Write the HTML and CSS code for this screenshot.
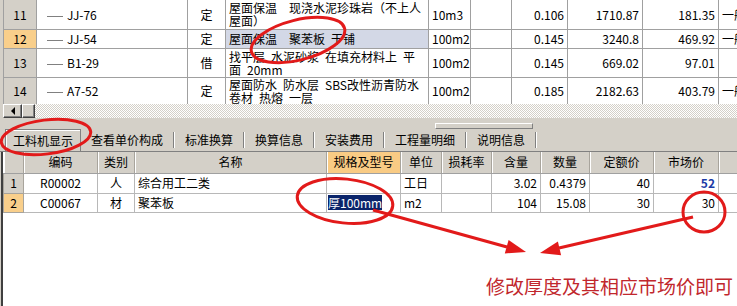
FILE: index.html
```html
<!DOCTYPE html>
<html lang="zh-CN">
<head>
    <meta charset="UTF-8">
    <title>工料机显示</title>
    <link rel="stylesheet" href="styles.css">
</head>
<body>
    <div class="upper">
        <div class="grid-top">
            <table class="qd">
                <colgroup>
                    <col class="w33"><col class="w151"><col class="w38"><col class="w203"><col class="w42">
                    <col class="w41"><col class="w56"><col class="w75"><col class="w76"><col class="w40">
                </colgroup>
                <tr class="first">
                    <td class="rh">11</td>
                    <td class="code"><span class="branch"></span>JJ-76</td>
                    <td class="c">定</td>
                    <td>屋面保温　现浇水泥珍珠岩（不上人<br>屋面）</td>
                    <td>10m3</td>
                    <td></td>
                    <td class="r">0.106</td>
                    <td class="r">1710.87</td>
                    <td class="r">181.35</td>
                    <td>一般</td>
                </tr>
                <tr class="one">
                    <td class="rh cur">12</td>
                    <td class="code"><span class="branch"></span>JJ-54</td>
                    <td class="c">定</td>
                    <td class="sel">屋面保温　聚苯板&ensp;干铺</td>
                    <td>100m2</td>
                    <td></td>
                    <td class="r">0.145</td>
                    <td class="r">3240.8</td>
                    <td class="r">469.92</td>
                    <td>一般</td>
                </tr>
                <tr>
                    <td class="rh">13</td>
                    <td class="code"><span class="branch"></span>B1-29</td>
                    <td class="c">借</td>
                    <td>找平层&ensp;水泥砂浆&ensp;在填充材料上&ensp;平<br>面&ensp;20mm</td>
                    <td>100m2</td>
                    <td></td>
                    <td class="r">0.145</td>
                    <td class="r">669.02</td>
                    <td class="r">97.01</td>
                    <td></td>
                </tr>
                <tr class="last">
                    <td class="rh">14</td>
                    <td class="code"><span class="branch"></span>A7-52</td>
                    <td class="c">定</td>
                    <td>屋面防水&ensp;防水层&ensp;SBS改性沥青防水<br>卷材&ensp;热熔&ensp;一层</td>
                    <td>100m2</td>
                    <td></td>
                    <td class="r">0.185</td>
                    <td class="r">2182.63</td>
                    <td class="r">403.79</td>
                    <td>一般</td>
                </tr>
            </table>
        </div>
        <div class="hscroll">
            <div class="sb-btn"></div>
            <div class="sb-thumb"></div>
            <div class="sb-track"></div>
        </div>
    </div>

    <div class="split"><div class="grip"></div></div>

    <div class="tabs">
        <div class="tab on">工料机显示</div>
        <div class="tab">查看单价构成</div>
        <div class="tab">标准换算</div>
        <div class="tab">换算信息</div>
        <div class="tab">安装费用</div>
        <div class="tab">工程量明细</div>
        <div class="tab">说明信息</div>
    </div>

    <div class="lower">
        <table class="gl">
            <colgroup>
                <col class="w20"><col class="w74"><col class="w37"><col class="w192"><col class="w74"><col class="w41">
                <col class="w50"><col class="w49"><col class="w49"><col class="w64"><col class="w65"><col class="w19">
            </colgroup>
            <tr>
                <th></th>
                <th>编码</th>
                <th>类别</th>
                <th>名称</th>
                <th class="hot">规格及型号</th>
                <th>单位</th>
                <th>损耗率</th>
                <th>含量</th>
                <th>数量</th>
                <th>定额价</th>
                <th>市场价</th>
                <th></th>
            </tr>
            <tr class="row1">
                <td class="rh">1</td>
                <td class="c">R00002</td>
                <td class="c">人</td>
                <td>综合用工二类</td>
                <td></td>
                <td>工日</td>
                <td></td>
                <td class="r">3.02</td>
                <td class="r">0.4379</td>
                <td class="r">40</td>
                <td class="r"><span class="mk">52</span></td>
                <td></td>
            </tr>
            <tr class="row2">
                <td class="rh cur">2</td>
                <td class="c">C00067</td>
                <td class="c">材</td>
                <td>聚苯板</td>
                <td class="editing"><span class="edit">厚100mm</span></td>
                <td>m2</td>
                <td></td>
                <td class="r">104</td>
                <td class="r">15.08</td>
                <td class="r">30</td>
                <td class="r">30</td>
                <td></td>
            </tr>
        </table>
        <div class="note">修改厚度及其相应市场价即可</div>
    </div>

    <!-- 红色标注 -->
    <svg class="marks" width="737" height="306" viewBox="0 0 737 306">
        <g fill="none" stroke="#e21a1a" stroke-width="3">
            <ellipse cx="298" cy="40" rx="48" ry="20" transform="rotate(-14 298 40)"/>
            <ellipse cx="46" cy="137" rx="45" ry="17" transform="rotate(-7 46 137)"/>
            <ellipse cx="345" cy="201" rx="48" ry="22" transform="rotate(6 345 201)"/>
            <ellipse cx="704" cy="212" rx="21" ry="20"/>
            <line x1="373" y1="210" x2="507" y2="247"/>
            <line x1="693" y1="217" x2="559" y2="248"/>
        </g>
        <g fill="#e21a1a">
            <polygon points="526,252 504.8,253.4 508.6,239.9"/>
            <polygon points="540,253 557.9,241.6 561.1,255.2"/>
        </g>
    </svg>
</body>
</html>
```

FILE: styles.css
```css
/* ==================================== */
/* 基本样式                              */
/* ==================================== */
* {
    box-sizing: border-box;
}

body {
    margin: 0;
    width: 737px;
    height: 306px;
    overflow: hidden;
    position: relative;
    background-color: #d4d0c8;
    font-family: "Noto Sans CJK SC", sans-serif;
    font-size: 12px;
    line-height: 12px;
    color: #000;
}

table {
    border-collapse: collapse;
    table-layout: fixed;
}

td, th {
    padding: 0 3px;
    white-space: nowrap;
    overflow: hidden;
    vertical-align: middle;
    text-align: left;
}

.c { text-align: center; }
.r { text-align: right; }

.w19 { width: 19px; }
.w20 { width: 20px; }
.w33 { width: 33px; }
.w37 { width: 37px; }
.w38 { width: 38px; }
.w40 { width: 40px; }
.w41 { width: 41px; }
.w42 { width: 42px; }
.w49 { width: 49px; }
.w50 { width: 50px; }
.w56 { width: 56px; }
.w64 { width: 64px; }
.w65 { width: 65px; }
.w74 { width: 74px; }
.w75 { width: 75px; }
.w76 { width: 76px; }
.w151 { width: 151px; }
.w192 { width: 192px; }
.w203 { width: 203px; }

/* ==================================== */
/* 上方清单表格                          */
/* ==================================== */
.upper {
    margin-left: 3px;
}

.grid-top {
    height: 104px;
    overflow: hidden;
    background-color: #fff;
}

.qd {
    width: 755px;
}

.qd td {
    height: 29px;
    line-height: 13px;
    border: 1px solid #a0a0a0;
}

.qd tr.first td {
    border-top: 0;
}

.qd tr.one td {
    height: 19px;
}

.qd tr.last td {
    height: 27px;
}

.rh {
    background-color: #d4d0c8;
    text-align: center;
    padding: 0;
}

.rh.cur {
    background-color: #f9cf8b;
}

.code {
    padding-left: 10px;
}

.branch {
    display: inline-block;
    width: 16px;
    border-top: 1px solid #808080;
    vertical-align: middle;
    margin-right: 4px;
}

.qd td.sel {
    background-color: #d3d8e6;
}

/* 横向滚动条 */
.hscroll {
    display: flex;
    height: 14px;
}

.sb-btn, .sb-thumb {
    background-color: #d4d0c8;
    border: 1px solid;
    border-color: #fff #404040 #404040 #fff;
    box-shadow: inset -1px -1px 0 #808080;
}

.sb-btn {
    width: 19px;
    display: flex;
    align-items: center;
    justify-content: center;
}

.sb-btn::before {
    content: '';
    border: 4px solid transparent;
    border-left: 0;
    border-right-color: #000;
}

.sb-thumb {
    width: 13px;
}

.sb-track {
    flex: 1;
    background-color: #fff;
    background-image: conic-gradient(#d4d0c8 25%, transparent 0 50%, #d4d0c8 0 75%, transparent 0);
    background-size: 2px 2px;
}

/* 分隔条 */
.split {
    height: 11px;
    padding: 5px 0 0 435px;
}

.grip {
    width: 98px;
    height: 6px;
    border: 1px solid;
    border-color: #fff #808080 #808080 #fff;
}

/* ==================================== */
/* 页签                                  */
/* ==================================== */
.tabs {
    display: flex;
    align-items: center;
    height: 23px;
    padding-left: 5px;
    border-bottom: 1px solid #808080;
}

.tab {
    padding: 0 10px;
    line-height: 16px;
    border-right: 1px solid #808080;
    margin-right: 1px;
    box-shadow: 1px 0 0 #fff;
}

.tab.on {
    align-self: stretch;
    line-height: 21px;
    padding: 0 7px;
    margin-right: 0;
    border: 1px solid #808080;
    border-bottom: 0;
    box-shadow: inset 1px 1px 0 #fff;
}

/* ==================================== */
/* 下方工料机表格                        */
/* ==================================== */
.lower {
    height: 154px;
    margin-left: 1px;
    border-left: 2px solid #404040;
    background-color: #fff;
}

.gl {
    width: 734px;
}

.gl th {
    height: 21px;
    font-weight: normal;
    text-align: center;
    background-color: #d4d0c8;
    border-right: 1px solid #a8a49c;
    border-bottom: 1px solid #a0a0a0;
    box-shadow: inset 1px 0 0 #fff;
}

.gl th.hot {
    background-color: #f9cb84;
}

.gl td {
    height: 20px;
    border: 1px solid #b8b8b8;
    border-top: 0;
}

.gl tr.row2 td {
    height: 19px;
}

.gl td.rh {
    border-color: #a8a49c;
}

.gl td.editing {
    padding-left: 1px;
}

.edit {
    display: inline-block;
    line-height: 15px;
    background-color: #0a246a;
    color: #fff;
}

.mk {
    color: #1b3aa6;
    font-weight: bold;
}

.note {
    margin-top: 62px;
    padding-right: 4px;
    text-align: right;
    font-size: 19px;
    line-height: 22px;
    color: #c1272d;
}

/* 红色标注层 */
.marks {
    position: absolute;
    top: 0;
    left: 0;
    pointer-events: none;
}
```
